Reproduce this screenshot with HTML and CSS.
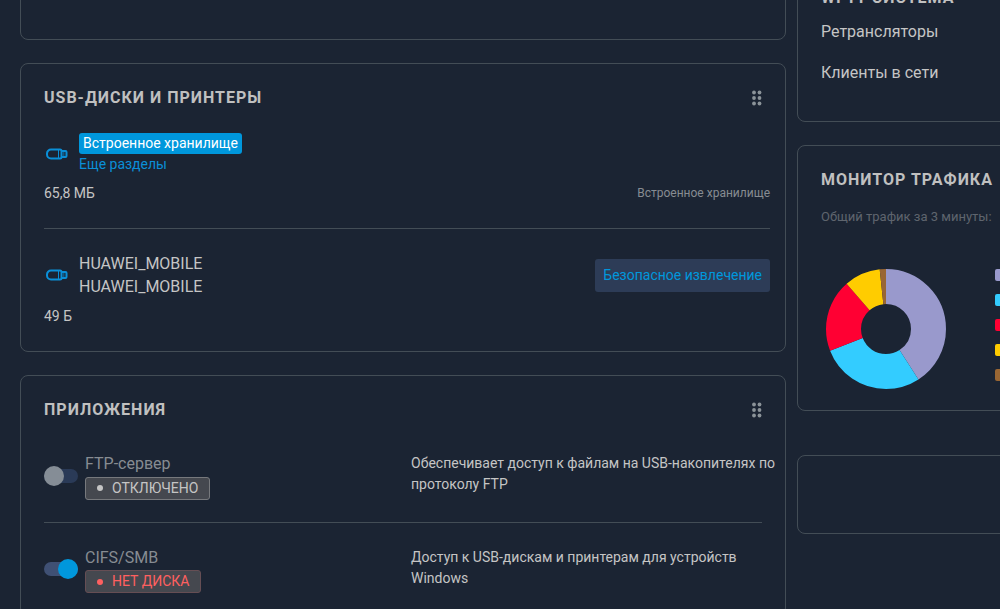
FILE: index.html
```
<!DOCTYPE html>
<html lang="ru">
<head>
    <meta charset="UTF-8">
    <meta name="viewport" content="width=device-width, initial-scale=1.0">
    <title>Системный монитор</title>
    <link rel="stylesheet" href="styles.css">
</head>
<body>

<main class="dashboard">
    <div class="column">
        <section class="card card-empty"></section>

        <section class="card card-usb">
            <div class="card-header">
                <h2>USB-диски и принтеры</h2>
                <button class="drag" aria-label="Переместить">
                    <svg width="10" height="16" viewBox="0 0 10 16"><circle cx="2" cy="2.5" r="1.900"/><circle cx="7.5" cy="2.5" r="1.900"/><circle cx="2" cy="8" r="1.900"/><circle cx="7.5" cy="8" r="1.900"/><circle cx="2" cy="13.5" r="1.900"/><circle cx="7.5" cy="13.5" r="1.900"/></svg>
                </button>
            </div>

            <div class="disk">
                <div class="disk-head">
                    <svg class="usb-icon" width="24" height="12" viewBox="0 0 24 12"><path d="M7 1.500h9a1.500 1.500 0 0 1 1.500 1.500v6a1.500 1.500 0 0 1-1.500 1.500H7a4 4 0 0 1-4-4v-1a4 4 0 0 1 4-4z M17.500 3h4a1 1 0 0 1 1 1v4a1 1 0 0 1-1 1h-4"/><path class="thin" d="M14.500 2v8 M19 5h1.500 M19 7h1.500"/></svg>
                    <div class="disk-names">
                        <a href="#" class="storage">Встроенное хранилище</a>
                        <a href="#" class="more">Еще разделы</a>
                    </div>
                </div>
                <div class="disk-foot">
                    <span>65,8 МБ</span>
                    <small>Встроенное хранилище</small>
                </div>
            </div>

            <div class="disk">
                <div class="disk-head">
                    <svg class="usb-icon" width="24" height="12" viewBox="0 0 24 12"><path d="M7 1.500h9a1.500 1.500 0 0 1 1.500 1.500v6a1.500 1.500 0 0 1-1.500 1.500H7a4 4 0 0 1-4-4v-1a4 4 0 0 1 4-4z M17.500 3h4a1 1 0 0 1 1 1v4a1 1 0 0 1-1 1h-4"/><path class="thin" d="M14.500 2v8 M19 5h1.500 M19 7h1.500"/></svg>
                    <div class="disk-names">
                        <span>HUAWEI_MOBILE</span>
                        <span>HUAWEI_MOBILE</span>
                    </div>
                    <button class="eject">Безопасное извлечение</button>
                </div>
                <div class="disk-foot">
                    <span>49 Б</span>
                </div>
            </div>
        </section>

        <section class="card card-apps">
            <div class="card-header">
                <h2>Приложения</h2>
                <button class="drag" aria-label="Переместить">
                    <svg width="10" height="16" viewBox="0 0 10 16"><circle cx="2" cy="2.5" r="1.900"/><circle cx="7.5" cy="2.5" r="1.900"/><circle cx="2" cy="8" r="1.900"/><circle cx="7.5" cy="8" r="1.900"/><circle cx="2" cy="13.5" r="1.900"/><circle cx="7.5" cy="13.5" r="1.900"/></svg>
                </button>
            </div>

            <div class="app">
                <div class="app-main">
                    <input type="checkbox" class="toggle" id="ftp">
                    <div>
                        <label for="ftp">FTP-сервер</label>
                        <span class="status">Отключено</span>
                    </div>
                </div>
                <p>Обеспечивает доступ к файлам на USB-накопителях по<br>протоколу FTP</p>
            </div>

            <div class="app">
                <div class="app-main">
                    <input type="checkbox" class="toggle" id="smb" checked>
                    <div>
                        <label for="smb">CIFS/SMB</label>
                        <span class="status status-error">Нет диска</span>
                    </div>
                </div>
                <p>Доступ к USB-дискам и принтерам для устройств<br>Windows</p>
            </div>
        </section>
    </div>

    <div class="column">
        <section class="card card-wifi">
            <h2>Wi-Fi-система</h2>
            <nav>
                <a href="#">Ретрансляторы</a>
                <a href="#">Клиенты в сети</a>
            </nav>
        </section>

        <section class="card card-traffic">
            <h2>Монитор трафика</h2>
            <p>Общий трафик за 3 минуты:</p>
            <div class="chart">
                <svg class="donut" width="120" height="120" viewBox="0 0 120 120">
                    <circle class="c1" cx="60" cy="60" r="42.5" pathLength="100" stroke-dasharray="40.9 100"/>
                    <circle class="c2" cx="60" cy="60" r="42.5" pathLength="100" stroke-dasharray="28.2 100" stroke-dashoffset="-40.9"/>
                    <circle class="c3" cx="60" cy="60" r="42.5" pathLength="100" stroke-dasharray="19.5 100" stroke-dashoffset="-69.1"/>
                    <circle class="c4" cx="60" cy="60" r="42.5" pathLength="100" stroke-dasharray="9.7 100" stroke-dashoffset="-88.6"/>
                    <circle class="c5" cx="60" cy="60" r="42.5" pathLength="100" stroke-dasharray="1.7 100" stroke-dashoffset="-98.3"/>
                </svg>
                <div class="legend">
                    <i class="c1"></i>
                    <i class="c2"></i>
                    <i class="c3"></i>
                    <i class="c4"></i>
                    <i class="c5"></i>
                </div>
            </div>
        </section>

        <section class="card card-blank"></section>
    </div>
</main>

</body>
</html>
```
FILE: styles.css
```
* {
    box-sizing: border-box;
}
body {
    margin: 0;
    background-color: #1b2433;
    color: #c5c5c5;
    font-family: Roboto, "Liberation Sans", sans-serif;
    font-size: 14px;
    line-height: 21px;
    overflow: hidden;
}
a {
    color: inherit;
    text-decoration: none;
}
p {
    margin: 0;
}
button {
    font-family: inherit;
    border: none;
    cursor: pointer;
}

/* page is scrolled, the side column runs past the right edge */
.dashboard {
    display: grid;
    grid-template-columns: minmax(0, 1fr) 260px;
    gap: 11px;
    align-items: start;
    margin: -37px -57px 0 20px;
}
.column {
    display: flex;
    flex-direction: column;
    gap: 23px;
}
.card {
    padding: 22px 23px;
    border: 1px solid #434d56;
    border-radius: 8px;
}
.card-empty {
    min-height: 77px;
}
h2 {
    margin: 0;
    color: #c0c0c0;
    font-size: 16px;
    font-weight: 700;
    line-height: 24px;
    letter-spacing: 1px;
    text-transform: uppercase;
    white-space: nowrap;
}
.card-header {
    display: flex;
    justify-content: space-between;
    align-items: center;
}
.drag {
    display: flex;
    padding: 0;
    background: none;
}
.drag svg {
    fill: #8b9399;
}

/* usb */
.card-usb {
    padding-right: 15px;
    padding-bottom: 24px;
}
.card-usb .card-header {
    margin-bottom: 23px;
    padding-right: 8px;
}
.disk + .disk {
    margin-top: 24px;
    padding-top: 23px;
    border-top: 1px solid #434d56;
}
.disk-head {
    display: flex;
    align-items: center;
}
.usb-icon {
    margin-right: 11px;
    fill: none;
    stroke: #0a8fd8;
    stroke-width: 2;
}
.usb-icon .thin {
    stroke-width: 1;
}
.disk-names {
    display: flex;
    flex-direction: column;
    align-items: flex-start;
    font-size: 16px;
    line-height: 23px;
}
.storage, .more {
    font-size: 14px;
    line-height: 21px;
}
.storage {
    padding: 0 4px;
    border-radius: 3px;
    background-color: #0097dc;
    color: white;
}
.more {
    color: #0a8fd8;
}
.eject {
    height: 33px;
    margin-left: auto;
    padding: 0 8px;
    border-radius: 3px;
    background-color: #2d3c57;
    color: #0097dc;
    font-size: 14px;
}
.disk-foot {
    display: flex;
    justify-content: space-between;
    margin-top: 8px;
}
.disk-foot small {
    color: #878c92;
    font-size: 12px;
}

/* apps */
.card-apps .card-header {
    margin-bottom: 30px;
}
.app {
    display: grid;
    grid-template-columns: repeat(2, minmax(0, 1fr));
    gap: 16px;
}
.app + .app {
    margin-top: 22px;
    padding-top: 23px;
    border-top: 1px solid #434d56;
}
.app p {
    padding-top: 1px;
    white-space: nowrap;
}
.app-main {
    display: flex;
    align-items: center;
    gap: 7px;
}
.app label {
    display: block;
    color: #878c92;
    font-size: 16px;
    line-height: 24px;
}
.toggle {
    position: relative;
    width: 34px;
    height: 14px;
    margin: 0;
    border-radius: 7px;
    background-color: #2a3a57;
    appearance: none;
}
.toggle::before {
    content: "";
    position: absolute;
    top: -3px;
    left: 0;
    width: 20px;
    height: 20px;
    border-radius: 50%;
    background-color: #858d96;
}
.toggle:checked {
    background-color: #3f5074;
}
.toggle:checked::before {
    left: 14px;
    background-color: #0097dc;
}
.status {
    display: inline-flex;
    align-items: center;
    gap: 9px;
    padding: 0 11px;
    border: 1px solid #77797d;
    border-radius: 3px;
    background-color: #45484f;
    color: #c5c5c5;
    text-transform: uppercase;
}
.status::before {
    content: "";
    width: 6px;
    height: 6px;
    border-radius: 50%;
    background-color: currentColor;
}
.status-error {
    border-color: #664e54;
    color: #ff6060;
}

/* side column */
nav {
    display: flex;
    flex-direction: column;
    gap: 17px;
    margin: 10px 0 14px;
    font-size: 16px;
    line-height: 24px;
}
.card-traffic {
    padding-bottom: 21px;
}
.card-traffic p {
    margin: 14px 0 42px;
    color: #5f656e;
    font-size: 13px;
    white-space: nowrap;
}
.chart {
    display: flex;
    align-items: flex-start;
    gap: 49px;
    padding-left: 5px;
}
.donut {
    flex: none;
    fill: none;
    stroke-width: 35;
    transform: rotate(-90deg);
}
.legend {
    display: flex;
    flex-direction: column;
    gap: 13px;
}
.legend i {
    width: 12px;
    height: 12px;
    border-radius: 2px;
    background-color: currentColor;
}
.c1 {
    color: #9999cc;
}
.c2 {
    color: #33ccff;
}
.c3 {
    color: #ff0033;
}
.c4 {
    color: #ffcc00;
}
.c5 {
    color: #996633;
}
.donut circle {
    stroke: currentColor;
}
.card-blank {
    min-height: 79px;
    margin-top: 21px;
}
```
